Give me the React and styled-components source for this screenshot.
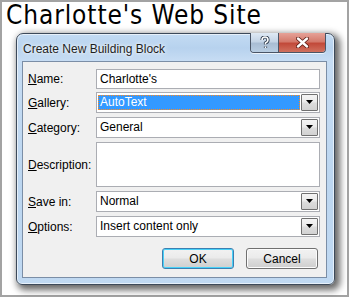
import React from 'react';
import styled, { createGlobalStyle } from 'styled-components';

const Global = createGlobalStyle`
  body { margin: 0; background: #fff; }
`;

const Page = styled.div`
  box-sizing: border-box;
  width: 349px;
  height: 297px;
  border: 2px solid #a3a3a3;
  background: #fff;
`;

const Heading = styled.h1`
  margin: 0;
  padding-left: 4px;
  height: 24px;
  line-height: 26px;
  font-family: "DejaVu Sans Condensed", "DejaVu Sans", sans-serif;
  font-weight: normal;
  font-size: 26px;
  letter-spacing: 0.9px;
  color: #000;
  white-space: nowrap;
`;

const Window = styled.div`
  box-sizing: border-box;
  margin: 7px 0 0 14px;
  width: 319px;
  height: 252px;
  border: 1px solid #3d4a5a;
  border-radius: 7px 7px 6px 6px;
  background: linear-gradient(180deg, #c3dbf3 0px, #b7d2ee 14px, #c6dcf3 26px, #bcd6f0 60%, #c0d9f2 100%);
  box-shadow: 3px 3px 7px 2px rgba(0, 0, 0, 0.6), inset 0 0 0 1px rgba(255, 255, 255, 0.6);
  display: flex;
  flex-direction: column;
  font-family: "Liberation Sans", Arial, sans-serif;
  font-size: 12px;
  color: #000;
`;

const TitleBar = styled.div`
  height: 27px;
  display: flex;
  align-items: flex-start;
  padding: 0 8px 0 6px;
`;

const Title = styled.div`
  flex: 1;
  padding-top: 8px;
  color: #1e1e1e;
  text-shadow: 0 0 6px #fff, 0 0 3px #fff;
`;

const CaptionButtons = styled.div`
  display: flex;
  margin-top: -1px;
  border: 1px solid #4a5566;
  border-top: none;
  border-radius: 0 0 4px 4px;
  overflow: hidden;
  box-shadow: 0 1px 0 rgba(255, 255, 255, 0.7);
`;

const CaptionButton = styled.div`
  height: 19px;
  width: ${p => p.$w}px;
  display: flex;
  align-items: center;
  justify-content: center;
  background: ${p => p.$close
    ? 'linear-gradient(180deg, #e6a298 0%, #d47a6c 45%, #c24a3a 55%, #d0705e 100%)'
    : 'linear-gradient(180deg, #dfe9f4 0%, #c4d4e6 45%, #a9bdd4 55%, #b8cde2 100%)'};
  border-left: ${p => (p.$close ? '1px solid #4a5566' : 'none')};
`;

const Client = styled.div`
  flex: 1;
  margin: 0 7px 6px 5px;
  border: 1px solid #7b8ea6;
  background: #f0f0f0;
  padding: 7px 6px 8px 5px;
  display: flex;
  flex-direction: column;
`;

const Row = styled.div`
  display: flex;
  align-items: center;
  margin-top: ${p => p.$gap}px;
`;

const Label = styled.div`
  width: 68px;
  flex: none;
  & u { text-decoration: underline; text-underline-offset: 1px; }
`;

const Field = styled.div`
  box-sizing: border-box;
  flex: 1;
  height: ${p => p.$h}px;
  border: 1px solid #abadb3;
  background: #fff;
  display: flex;
  align-items: ${p => (p.$area ? 'flex-start' : 'center')};
  padding: 1px;
`;

const Value = styled.div`
  flex: 1;
  height: 15px;
  line-height: 15px;
  padding-left: 2px;
  box-sizing: border-box;
  color: ${p => (p.$selected ? '#fff' : '#000')};
  background: ${p => (p.$selected ? '#3399ff' : 'transparent')};
  outline: ${p => (p.$selected ? '1px dotted #ff8a1f' : 'none')};
  outline-offset: -1px;
  margin-right: 1px;
`;

const DropButton = styled.div`
  box-sizing: border-box;
  width: 17px;
  align-self: stretch;
  border: 1px solid #707070;
  border-radius: 1px;
  background: linear-gradient(180deg, #f4f4f4 0%, #ebebeb 45%, #dcdcdc 55%, #d2d2d2 100%);
  display: flex;
  align-items: center;
  justify-content: center;
`;

const Footer = styled.div`
  display: flex;
  justify-content: flex-end;
  gap: 12px;
  margin-top: 11px;
  padding-right: 2px;
`;

const Button = styled.div`
  box-sizing: border-box;
  width: 72px;
  height: 21px;
  border: 1px solid ${p => (p.$default ? '#3c7fb1' : '#707070')};
  border-radius: 3px;
  background: linear-gradient(180deg, #f2f2f2 0%, #ebebeb 45%, #dddddd 55%, #cfcfcf 100%);
  box-shadow: ${p => (p.$default ? 'inset 0 0 0 1px #48d1f8' : 'inset 0 0 0 1px #fcfcfc')};
  display: flex;
  align-items: center;
  justify-content: center;
`;

const Arrow = () => (
  <svg width="9" height="7" viewBox="0 0 9 7">
    <path d="M1 1h7L4.5 5z" fill="#000" />
  </svg>
);

const Select = ({ children, selected }) => (
  <Field $h={21}>
    <Value $selected={selected}>{children}</Value>
    <DropButton><Arrow /></DropButton>
  </Field>
);

const App = () => (
  <Page>
    <Global />
    <Heading>Charlotte's Web Site</Heading>
    <Window>
      <TitleBar>
        <Title>Create New Building Block</Title>
        <CaptionButtons>
          <CaptionButton $w={27}>
            <svg width="10" height="13" viewBox="0 0 10 13">
              <path d="M2 4 Q2 1 5 1 Q8 1 8 4 Q8 6 5.5 7 L5.5 8.5 M5.5 10.5 L5.5 12" stroke="#2c3a4c" strokeWidth="3.2" fill="none" />
              <path d="M2 4 Q2 1 5 1 Q8 1 8 4 Q8 6 5.5 7 L5.5 8.5 M5.5 10.5 L5.5 12" stroke="#fff" strokeWidth="1.6" fill="none" />
            </svg>
          </CaptionButton>
          <CaptionButton $w={46} $close>
            <svg width="13" height="11" viewBox="0 0 13 11">
              <path d="M2 1.5 L11 9.5 M11 1.5 L2 9.5" stroke="#5a1a12" strokeWidth="4" strokeLinecap="round" />
              <path d="M2 1.5 L11 9.5 M11 1.5 L2 9.5" stroke="#fff" strokeWidth="2.4" strokeLinecap="round" />
            </svg>
          </CaptionButton>
        </CaptionButtons>
      </TitleBar>
      <Client>
        <Row $gap={0}>
          <Label><u>N</u>ame:</Label>
          <Field $h={20}><Value>Charlotte's</Value></Field>
        </Row>
        <Row $gap={3}>
          <Label><u>G</u>allery:</Label>
          <Select selected>AutoText</Select>
        </Row>
        <Row $gap={4}>
          <Label><u>C</u>ategory:</Label>
          <Select>General</Select>
        </Row>
        <Row $gap={4}>
          <Label><u>D</u>escription:</Label>
          <Field $h={45} $area />
        </Row>
        <Row $gap={4}>
          <Label><u>S</u>ave in:</Label>
          <Select>Normal</Select>
        </Row>
        <Row $gap={4}>
          <Label><u>O</u>ptions:</Label>
          <Select>Insert content only</Select>
        </Row>
        <Footer>
          <Button $default>OK</Button>
          <Button>Cancel</Button>
        </Footer>
      </Client>
    </Window>
  </Page>
);

export default App;
